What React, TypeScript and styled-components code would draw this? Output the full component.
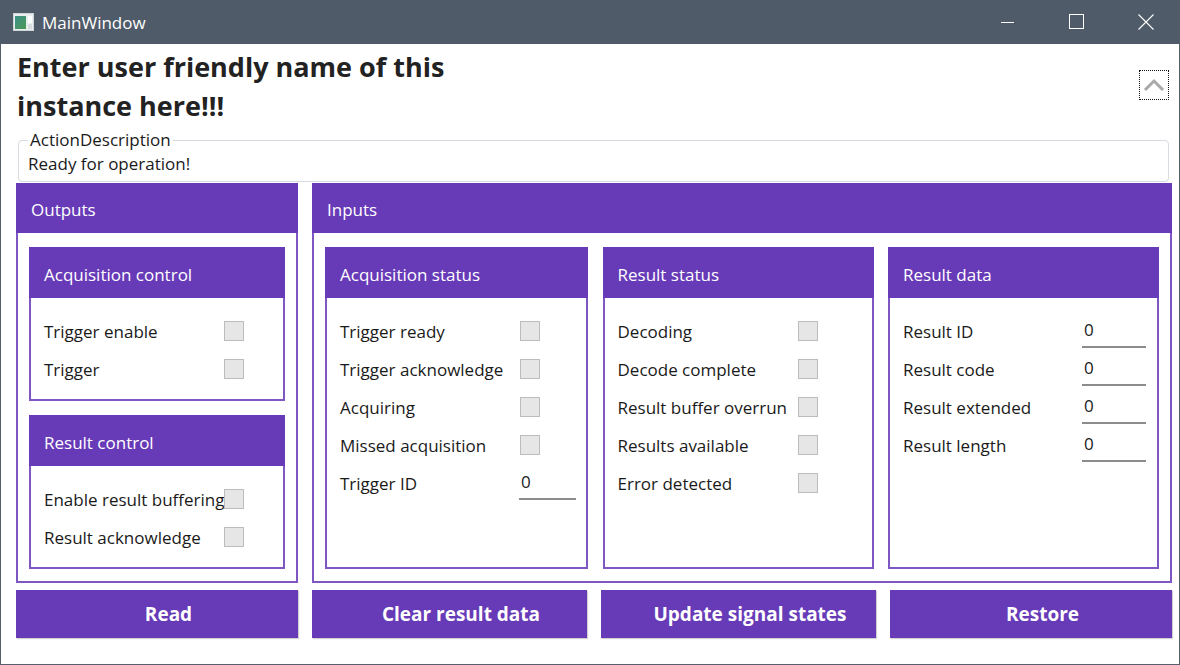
import React from 'react';
import styled, { createGlobalStyle } from 'styled-components';

const FONT = `"Segoe UI", "Open Sans", sans-serif`;
const PURPLE = '#673ab7';
const BORDER = '#7e57c2';

const Global = createGlobalStyle`
  html, body { margin: 0; padding: 0; background: #fff; }
  body { font-family: ${FONT}; color: #1a1a1a; }
  * { box-sizing: border-box; }
`;

const Window = styled.div`
  width: 1180px;
  height: 665px;
  display: flex;
  flex-direction: column;
  background: #fff;
`;

const TitleBar = styled.div`
  height: 44px;
  flex-shrink: 0;
  background: #505b69;
  display: flex;
  align-items: center;
  color: #fff;
`;

const AppIcon = styled.svg`
  margin-left: 13px;
  width: 21px;
  height: 18px;
`;

const TitleText = styled.div`
  margin-left: 8px;
  font-size: 17px;
  flex: 1;
`;

const CaptionButton = styled.div`
  width: 69px;
  height: 44px;
  display: flex;
  align-items: center;
  justify-content: center;
`;

const Body = styled.div`
  flex: 1;
  border: 1px solid #56606d;
  border-top: none;
  padding: 0 7px 0 15px;
  display: flex;
  flex-direction: column;
`;

const HeaderRow = styled.div`
  display: flex;
  justify-content: space-between;
  align-items: flex-start;
  padding-right: 3px;
`;

const Heading = styled.h1`
  margin: 0;
  padding: 3px 0 0 1px;
  font-size: 27px;
  line-height: 39px;
  font-weight: 700;
  color: #222;
  white-space: nowrap;
`;

const CollapseButton = styled.div`
  margin-top: 26px;
  width: 30px;
  height: 30px;
  border: 1px dotted #111;
  display: flex;
  align-items: center;
  justify-content: center;
`;

const Group = styled.fieldset`
  margin: 4px 3px 0 2px;
  padding: 2px 9px 6px;
  border: 1px solid #d6dbe1;
  border-radius: 4px;
  font-size: 17px;
  line-height: 22px;
`;

const GroupLegend = styled.legend`
  padding: 0 2px;
  font-size: 17px;
  line-height: 22px;
`;

const MainRow = styled.div`
  margin-top: 1px;
  display: flex;
  gap: 14px;
  height: 400px;
`;

const Panel = styled.div<{ $width: number }>`
  width: ${p => p.$width}px;
  display: flex;
  flex-direction: column;
`;

const PanelHeader = styled.div<{ $height: number; $pad: number }>`
  height: ${p => p.$height}px;
  flex-shrink: 0;
  background: ${PURPLE};
  color: #fff;
  font-size: 17px;
  display: flex;
  align-items: center;
  padding: 3px 0 0 ${p => p.$pad}px;
`;

const PanelBody = styled.div`
  flex: 1;
  border: 2px solid ${BORDER};
  border-top: none;
`;

const OutputsBody = styled(PanelBody)`
  padding: 14px 11px 12px;
  display: flex;
  flex-direction: column;
  gap: 14px;
`;

const InputsBody = styled(PanelBody)`
  padding: 14px 11px 12px;
  display: grid;
  grid-template-columns: 263px 271px 271px;
  justify-content: space-between;
`;

const BoxBody = styled.div`
  flex: 1;
  border: 2px solid ${BORDER};
  border-top: none;
  padding: 14px 0 0 13px;
  display: flex;
  flex-direction: column;
`;

const Row = styled.div`
  height: 38px;
  display: flex;
  align-items: center;
  font-size: 17px;
`;

const Label = styled.div`
  width: 180px;
  flex-shrink: 0;
  white-space: nowrap;
`;

const Check = styled.div`
  width: 20px;
  height: 20px;
  background: #e6e6e6;
  border: 1px solid #bcbcbc;
`;

const TextBox = styled.div<{ $width: number }>`
  width: ${p => p.$width}px;
  height: 34px;
  margin-left: -1px;
  border-bottom: 2px solid #8c8c8c;
  padding: 4px 0 0 2px;
  font-size: 17px;
  line-height: 24px;
`;

const ButtonRow = styled.div`
  margin-top: 7px;
  display: grid;
  grid-template-columns: 282px 275px 275px 282px;
  gap: 14px;
`;

const Button = styled.div`
  height: 48px;
  background: ${PURPLE};
  color: #fff;
  font-size: 19px;
  font-weight: 700;
  display: flex;
  align-items: center;
  justify-content: center;
  padding-left: 23px;
  box-shadow: 1px 1px 1px rgba(0, 0, 0, 0.18);
`;

type Item = { label: string; kind: 'check' | 'text'; width?: number };

const SubBox = styled.div`
  display: flex;
  flex-direction: column;
  flex: 1;
`;

function Box({ title, items }: { title: string; items: Item[] }) {
  return (
    <SubBox>
      <PanelHeader $height={51} $pad={15}>{title}</PanelHeader>
      <BoxBody>
        {items.map(it => (
          <Row key={it.label}>
            <Label>{it.label}</Label>
            {it.kind === 'check' ? <Check /> : <TextBox $width={it.width ?? 56}>0</TextBox>}
          </Row>
        ))}
      </BoxBody>
    </SubBox>
  );
}

const c = (label: string): Item => ({ label, kind: 'check' });
const t = (label: string, width: number): Item => ({ label, kind: 'text', width });

export default function App() {
  return (
    <>
      <Global />
      <Window>
        <TitleBar>
          <AppIcon viewBox="0 0 21 18">
            <defs>
              <linearGradient id="g" x1="0" y1="0" x2="1" y2="1">
                <stop offset="0" stopColor="#3d8f8a" />
                <stop offset="1" stopColor="#4a9a55" />
              </linearGradient>
            </defs>
            <rect x="0.5" y="0.5" width="20" height="17" fill="#e9eef1" stroke="#cfd6da" />
            <rect x="2" y="3" width="11" height="13" fill="url(#g)" />
            <rect x="15" y="3" width="4" height="7" fill="#fff" />
            <rect x="15" y="11" width="4" height="5" fill="#d8dde0" />
          </AppIcon>
          <TitleText>MainWindow</TitleText>
          <CaptionButton>
            <svg width="14" height="14" viewBox="0 0 14 14"><line x1="0" y1="7.5" x2="13" y2="7.5" stroke="#fff" strokeWidth="1" /></svg>
          </CaptionButton>
          <CaptionButton>
            <svg width="16" height="16" viewBox="0 0 16 16"><rect x="0.5" y="0.5" width="14" height="14" fill="none" stroke="#fff" strokeWidth="1" /></svg>
          </CaptionButton>
          <CaptionButton>
            <svg width="16" height="16" viewBox="0 0 16 16"><path d="M0.5 0.5L15.5 15.5M15.5 0.5L0.5 15.5" stroke="#fff" strokeWidth="1.1" /></svg>
          </CaptionButton>
        </TitleBar>
        <Body>
          <HeaderRow>
            <Heading>
              Enter user friendly name of this
              <br />
              instance here!!!
            </Heading>
            <CollapseButton>
              <svg width="22" height="14" viewBox="0 0 22 14">
                <path d="M2 12L11 3L20 12" fill="none" stroke="#a9a9a9" strokeWidth="3" />
              </svg>
            </CollapseButton>
          </HeaderRow>
          <Group>
            <GroupLegend>ActionDescription</GroupLegend>
            Ready for operation!
          </Group>
          <MainRow>
            <Panel $width={282}>
              <PanelHeader $height={50} $pad={15}>Outputs</PanelHeader>
              <OutputsBody>
                <Box title="Acquisition control" items={[c('Trigger enable'), c('Trigger')]} />
                <Box title="Result control" items={[c('Enable result buffering'), c('Result acknowledge')]} />
              </OutputsBody>
            </Panel>
            <Panel $width={860}>
              <PanelHeader $height={50} $pad={15}>Inputs</PanelHeader>
              <InputsBody>
                <Box
                  title="Acquisition status"
                  items={[c('Trigger ready'), c('Trigger acknowledge'), c('Acquiring'), c('Missed acquisition'), t('Trigger ID', 57)]}
                />
                <Box
                  title="Result status"
                  items={[c('Decoding'), c('Decode complete'), c('Result buffer overrun'), c('Results available'), c('Error detected')]}
                />
                <Box
                  title="Result data"
                  items={[t('Result ID', 64), t('Result code', 64), t('Result extended', 64), t('Result length', 64)]}
                />
              </InputsBody>
            </Panel>
          </MainRow>
          <ButtonRow>
            <Button>Read</Button>
            <Button>Clear result data</Button>
            <Button>Update signal states</Button>
            <Button>Restore</Button>
          </ButtonRow>
        </Body>
      </Window>
    </>
  );
}
